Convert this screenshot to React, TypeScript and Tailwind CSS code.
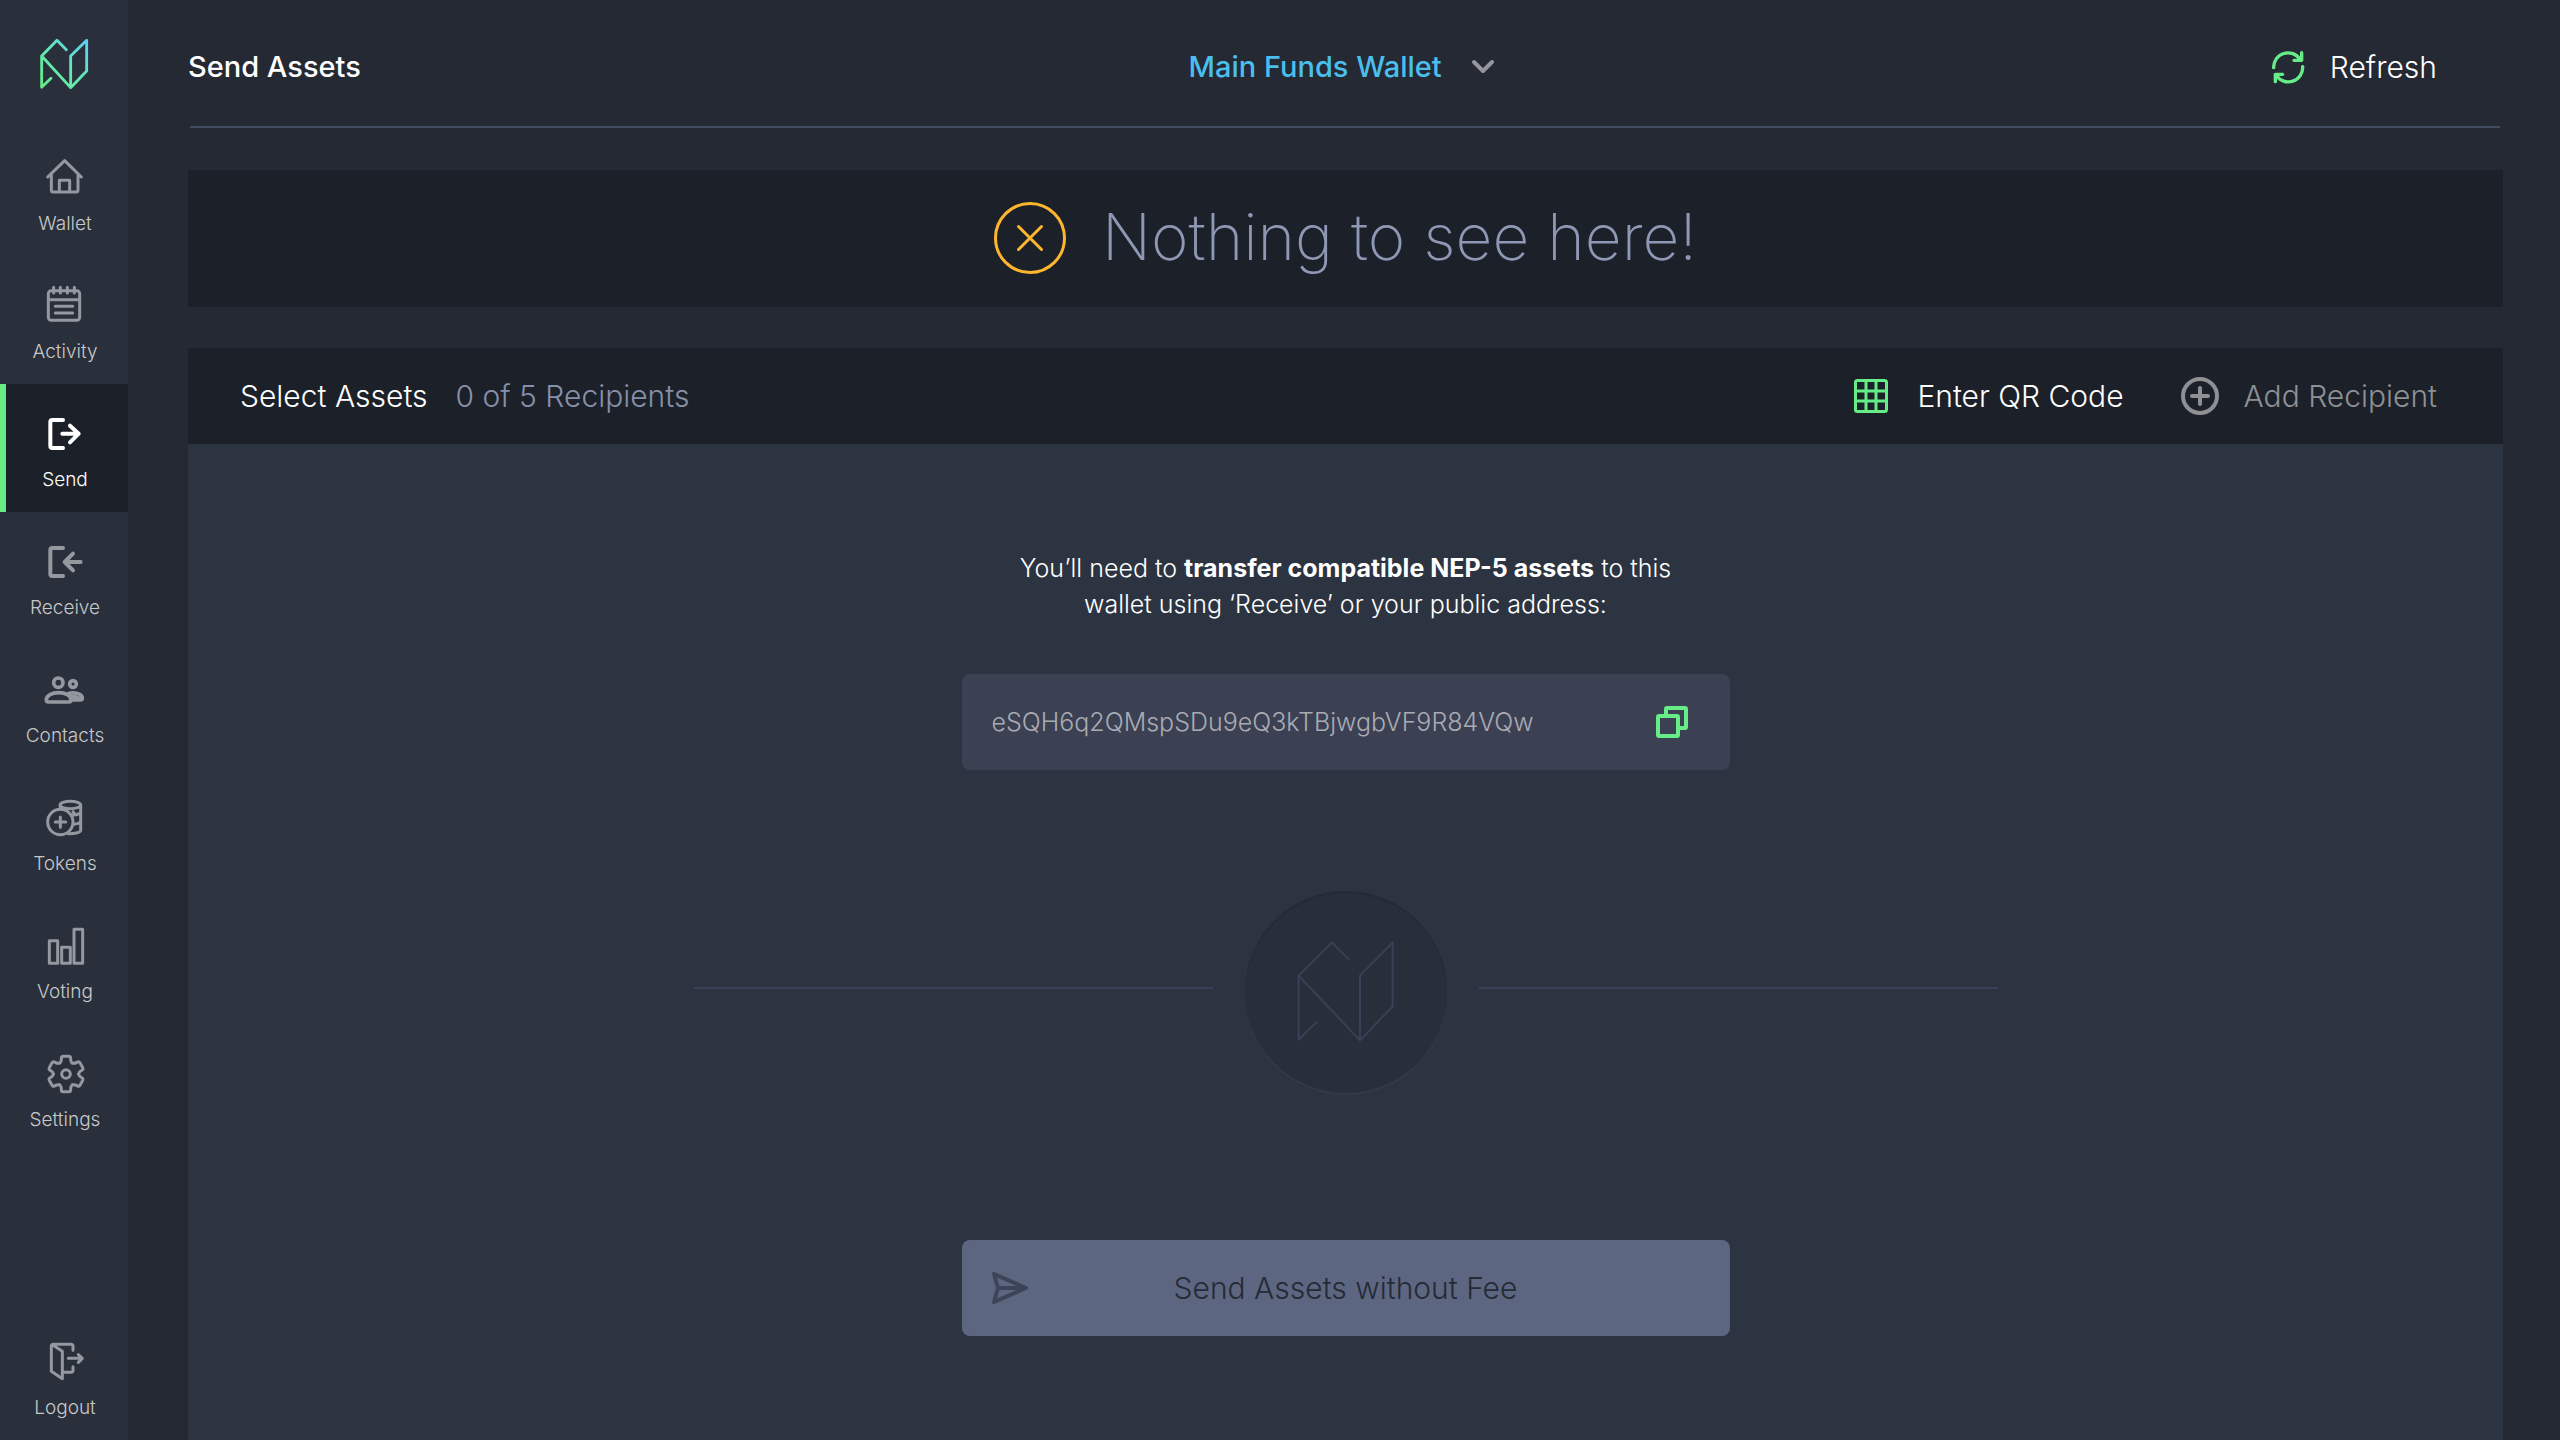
import React from "react";

type IconProps = { className?: string };

function rounded(points: number[][], radius: number): string {
  const n = points.length;
  const toward = (a: number[], b: number[]) => {
    const d = Math.hypot(b[0] - a[0], b[1] - a[1]);
    const t = Math.min(radius / d, 0.5);
    return [a[0] + (b[0] - a[0]) * t, a[1] + (b[1] - a[1]) * t];
  };
  return (
    points
      .map((p, i) => {
        const from = toward(p, points[(i + n - 1) % n]);
        const to = toward(p, points[(i + 1) % n]);
        return `${i === 0 ? "M" : "L"}${from} Q${p} ${to}`;
      })
      .join(" ") + " Z"
  );
}

const tooth = [
  [-21, -31],
  [-14, -38],
  [-14, -53],
  [14, -53],
  [14, -38],
  [21, -31],
];

const gearPath = rounded(
  [0, 60, 120, 180, 240, 300].flatMap((deg) => {
    const a = (deg * Math.PI) / 180;
    return tooth.map(([x, y]) => [
      198 + x * Math.cos(a) - y * Math.sin(a),
      882 + x * Math.sin(a) + y * Math.cos(a),
    ]);
  }),
  6,
);

function NavSvg({ top, width = 9, children }: { top: number; width?: number; children: React.ReactNode }) {
  return (
    <svg
      className="size-12"
      viewBox={`120 ${top} 144 144`}
      fill="none"
      stroke="currentColor"
      strokeWidth={width}
      strokeLinecap="round"
      strokeLinejoin="round"
      aria-hidden="true"
    >
      {children}
    </svg>
  );
}

const navItems = [
  {
    label: "Wallet",
    icon: (
      <NavSvg top={456}>
        <path d="M143 531 L194 482 L244 531 M154 524 V570 Q154 576 160 576 H228 Q234 576 234 570 V524 M178 574 V541 H209 V574" />
      </NavSvg>
    ),
  },
  {
    label: "Activity",
    icon: (
      <NavSvg top={840}>
        <rect x="145" y="872" width="94" height="89" rx="9" />
        <path d="M145 899 H239 M161 862 V879 M181 862 V879 M202 862 V879 M223 862 V879 M166 919 H218 M166 939 H218" />
      </NavSvg>
    ),
  },
  {
    label: "Send",
    active: true,
    icon: (
      <NavSvg top={84} width={12}>
        <path d="M189 120 H157 Q151 120 151 126 V198 Q151 204 157 204 H189 M187 161 H236 M210 137 L236 161 L210 187" />
      </NavSvg>
    ),
  },
  {
    label: "Receive",
    icon: (
      <NavSvg top={468} width={12}>
        <path d="M189 504 H157 Q151 504 151 510 V582 Q151 588 157 588 H189 M242 546 H195 M219 521 L194 546 L219 571" />
      </NavSvg>
    ),
  },
  {
    label: "Contacts",
    icon: (
      <NavSvg top={852} width={11}>
        <circle cx="175" cy="908" r="14" />
        <circle cx="219" cy="912" r="10" />
        <path d="M145 966 H207 Q213 966 213 960 C213 946 196 938 176 938 C156 938 139 947 139 960 Q139 966 145 966 Z M203 942 C222 934 247 942 247 954 Q247 960 241 960 H216 M210 949 Q225 949 238 955" />
      </NavSvg>
    ),
  },
  {
    label: "Tokens",
    icon: (
      <NavSvg top={36}>
        <circle cx="181" cy="126" r="38" />
        <path d="M166 126 H197 M181 111 V142" />
        <ellipse cx="211" cy="75" rx="31" ry="11" />
        <path d="M181 77 V87 M242 77 V152 Q238 161 205 161 M241 99 Q234 105 214 105 M241 126 Q236 131 221 133 M219 95 L222 99" />
      </NavSvg>
    ),
  },
  {
    label: "Voting",
    icon: (
      <NavSvg top={420}>
        <rect x="148" y="482" width="25" height="68" />
        <rect x="185" y="502" width="26" height="48" />
        <rect x="222" y="448" width="26" height="102" />
      </NavSvg>
    ),
  },
  {
    label: "Settings",
    icon: (
      <NavSvg top={804}>
        <path d={gearPath} />
        <circle cx="198" cy="882" r="13" />
      </NavSvg>
    ),
  },
];

const logoutIcon = (
  <NavSvg top={108}>
    <path d="M189 217 H213 Q219 217 219 211 V200 M219 151 V139 Q219 133 213 133 H160 Q154 133 154 139 V214 L187 236 V154 L158 135 M205 175 H245 M235 164 L247 175 L235 187" />
  </NavSvg>
);

function NavItem({ label, icon, active }: { label: string; icon: React.ReactNode; active?: boolean }) {
  return (
    <a
      href="#"
      aria-current={active ? "page" : undefined}
      className={
        active
          ? "flex h-32 flex-col items-center gap-3 bg-[#1c2129] pt-6 text-white shadow-[inset_6px_0_0_#66ed87]"
          : "flex h-32 flex-col items-center gap-3 pt-6 text-[#95989f]"
      }
    >
      {icon}
      <span className={active ? "pl-[2px] text-[19px] leading-6" : "pl-[2px] text-[19px] leading-6 text-[#c7c8ca]"}>
        {label}
      </span>
    </a>
  );
}

const markPath =
  "M199 149 L171 121 L125 168 L212 263 L260 213 V121 L212 168 V263 M125 168 V262 L153 235";

function Logo() {
  return (
    <svg className="size-14" viewBox="108 108 168 168" fill="none" aria-label="Neon">
      <defs>
        <linearGradient id="mark" gradientUnits="userSpaceOnUse" x1="125" y1="262" x2="260" y2="120">
          <stop offset="0" stopColor="#66ed87" />
          <stop offset="0.5" stopColor="#62e8b8" />
          <stop offset="1" stopColor="#5fd0f5" />
        </linearGradient>
      </defs>
      <path d={markPath} stroke="url(#mark)" strokeWidth="8.5" strokeLinecap="round" strokeLinejoin="round" />
    </svg>
  );
}

function RefreshIcon({ className }: IconProps) {
  return (
    <svg className={className} viewBox="213 87 108 108" fill="none" stroke="currentColor" strokeWidth="10" strokeLinecap="round" strokeLinejoin="round" aria-hidden="true">
      <path d="M224 143 A43 43 0 0 1 303 118 M308 98 V121 H285 M311 140 A43 43 0 0 1 232 166 M229 185 V163 H251" />
    </svg>
  );
}

function ChevronIcon({ className }: IconProps) {
  return (
    <svg className={className} viewBox="0 0 24 16" fill="none" stroke="currentColor" strokeWidth="4" strokeLinecap="round" strokeLinejoin="round" aria-hidden="true">
      <path d="M3 3 L12 12 L21 3" />
    </svg>
  );
}

function GridIcon({ className }: IconProps) {
  return (
    <svg className={className} viewBox="0 0 36 36" fill="none" stroke="currentColor" strokeWidth="3" aria-hidden="true">
      <rect x="2.5" y="2.5" width="31" height="31" rx="2" />
      <path d="M13 2 V34 M23 2 V34 M2 13 H34 M2 23 H34" />
    </svg>
  );
}

function PlusCircleIcon({ className }: IconProps) {
  return (
    <svg className={className} viewBox="0 0 40 40" fill="none" stroke="currentColor" strokeWidth="4" strokeLinecap="round" aria-hidden="true">
      <circle cx="20" cy="20" r="17" />
      <path d="M12 20 H28 M20 12 V28" />
    </svg>
  );
}

function CrossCircleIcon({ className }: IconProps) {
  return (
    <svg className={className} viewBox="0 0 72 72" fill="none" stroke="currentColor" strokeWidth="3" strokeLinecap="round" aria-hidden="true">
      <circle cx="36" cy="36" r="34.5" />
      <path d="M24.500 24.500 L47.500 47.500 M47.500 24.500 L24.500 47.500" />
    </svg>
  );
}

function CopyIcon({ className }: IconProps) {
  return (
    <svg className={className} viewBox="0 0 32 32" fill="none" stroke="currentColor" strokeWidth="4" strokeLinejoin="round" aria-hidden="true">
      <rect x="2" y="10" width="20" height="20" rx="1" />
      <path d="M10 10 V3 Q10 2 11 2 H29 Q30 2 30 3 V21 Q30 22 29 22 H22" />
    </svg>
  );
}

function PlaneIcon({ className }: IconProps) {
  return (
    <svg className={className} viewBox="0 0 36 32" fill="none" stroke="currentColor" strokeWidth="4" strokeLinecap="round" strokeLinejoin="round" aria-hidden="true">
      <path d="M2 2 L34 16 L2 30 L6 16 Z M6 16 H32" />
    </svg>
  );
}

function Ornament() {
  return (
    <div className="mt-[121px] flex w-full max-w-[1304px] items-center gap-8">
      <div className="mb-2 h-[2px] flex-1 bg-[#3a4055]" />
      <div className="flex size-[202px] shrink-0 items-center justify-center rounded-full bg-[#292f3a] shadow-[inset_0_2px_1px_#252a34,0_2px_1px_#343a4a]">
        <svg className="size-28" viewBox="331 230 336 336" fill="none" stroke="#3a4055" strokeWidth="6" strokeLinejoin="round" aria-hidden="true">
          <path d="M508 301 L456 249 L357 349 L541 543 L639 441 V249 L541 349 V543 M357 349 V541 L412 487" />
        </svg>
      </div>
      <div className="mb-2 h-[2px] flex-1 bg-[#3a4055]" />
    </div>
  );
}

export default function App() {
  return (
    <div className="flex min-h-screen bg-[#252933] font-['Inter','Liberation_Sans',sans-serif] text-[30px] leading-9 font-light text-white">
      <nav className="flex w-32 shrink-0 flex-col bg-[#292f3b]">
        <a href="#" className="flex h-32 justify-center pt-9">
          <Logo />
        </a>
        {navItems.map((item) => (
          <NavItem key={item.label} {...item} />
        ))}
        <div className="mt-auto">
          <NavItem label="Logout" icon={logoutIcon} />
        </div>
      </nav>

      <main className="flex min-w-0 flex-1 flex-col pr-[57px] pl-[60px]">
        <header className="grid h-[126px] grid-cols-[1fr_auto_1fr] items-center pt-2">
          <h1 className="text-[29px] font-medium">Send Assets</h1>
          <div className="relative mr-2 flex items-center text-[29px] text-[#4abfed]">
            <select aria-label="Wallet" className="appearance-none bg-transparent pr-[52px] font-medium outline-none">
              <option>Main Funds Wallet</option>
            </select>
            <ChevronIcon className="pointer-events-none absolute right-0 h-4 w-6 text-[#95979c]" />
          </div>
          <button type="button" className="mr-[66px] flex items-center gap-6 justify-self-end">
            <RefreshIcon className="size-9 text-[#66ed87]" />
            Refresh
          </button>
        </header>
        <hr className="mr-[3px] ml-[2px] border-t-2 border-[#434b60]" />

        <section className="mt-[42px] flex h-[137px] shrink-0 items-center justify-center gap-9 bg-[#1c2129] pb-[2px] text-[#8e97b3]">
          <CrossCircleIcon className="size-[72px] text-[#fdb62e]" />
          <p className="pb-[2px] text-[64px] leading-none font-extralight">Nothing to see here!</p>
        </section>

        <section className="mt-[41px] flex flex-1 flex-col bg-[#2d3441]">
          <div className="flex h-24 items-center bg-[#1c2129] pr-[66px] pl-[52px]">
            <h2>Select Assets</h2>
            <span className="ml-7 text-[#8790aa]">0 of 5 Recipients</span>
            <button type="button" className="ml-auto flex items-center gap-7">
              <GridIcon className="size-9 text-[#66ed87]" />
              Enter QR Code
            </button>
            <button type="button" disabled className="ml-14 flex items-center gap-6 text-[#8e9094]">
              <PlusCircleIcon className="size-10" />
              Add Recipient
            </button>
          </div>

          <div className="flex flex-col items-center pt-[106px] pb-[104px]">
            <p className="text-center text-[25px] leading-9">
              You’ll need to <strong className="font-bold">transfer compatible NEP-5 assets</strong> to this
              <br />
              wallet using ‘Receive’ or your public address:
            </p>
            <div className="mt-[52px] flex h-24 w-full max-w-[768px] items-center rounded-lg bg-[#3b4053] pr-[42px] pl-[30px]">
              <input
                readOnly
                aria-label="Public address"
                value="eSQH6q2QMspSDu9eQ3kTBjwgbVF9R84VQw"
                className="min-w-0 flex-1 bg-transparent text-[25px] text-[#a9abb3] outline-none"
              />
              <button type="button" aria-label="Copy address" className="text-[#66ed87]">
                <CopyIcon className="size-8" />
              </button>
            </div>
            <Ornament />
            <button
              type="button"
              disabled
              className="mt-[147px] grid h-24 w-full max-w-[768px] grid-cols-[36px_1fr_36px] items-center rounded-lg bg-[#5d6680] px-[30px] text-[#252b36]"
            >
              <PlaneIcon className="h-8 w-9 text-[#3c4457]" />
              Send Assets without Fee
            </button>
          </div>
        </section>
      </main>
    </div>
  );
}
